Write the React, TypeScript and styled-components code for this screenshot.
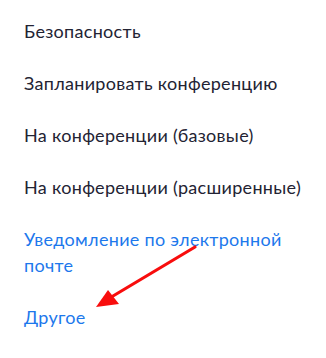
import React from 'react';
import styled, { createGlobalStyle } from 'styled-components';

const GlobalStyle = createGlobalStyle`
  html, body {
    margin: 0;
    padding: 0;
    background: #ffffff;
  }
  body {
    font-family: Lato, "Noto Sans", sans-serif;
  }
`;

const items = [
  { label: 'Безопасность' },
  { label: 'Запланировать конференцию' },
  { label: 'На конференции (базовые)' },
  { label: 'На конференции (расширенные)' },
  { label: 'Уведомление по электронной почте', active: true },
  { label: 'Другое', active: true },
];

function App() {
  return (
    <PageWrap>
      <GlobalStyle />
      <Menu>
        {items.map((item) => (
          <MenuItem key={item.label} $active={!!item.active}>
            {item.label}
          </MenuItem>
        ))}
      </Menu>
      <Arrow width="326" height="358" viewBox="0 0 326 358">
        <line x1="195" y1="247" x2="108" y2="299" stroke="#f80d0d" strokeWidth="3.2" strokeLinecap="round" />
        <polygon points="96,307 108,290 119,304" fill="#f80d0d" />
      </Arrow>
    </PageWrap>
  );
}

export default App;

const PageWrap = styled.div`
  position: relative;
  width: 326px;
  height: 358px;
  overflow: hidden;
  background: #ffffff;
`;

const Menu = styled.ul`
  list-style: none;
  margin: 0;
  padding: 5px 0 0 24px;
  width: 292px;
`;

const MenuItem = styled.li<{ $active: boolean }>`
  padding: 13px 0;
  font-size: 18px;
  line-height: 26px;
  letter-spacing: 0.3px;
  color: ${({ $active }) => ($active ? '#1d78ec' : '#232333')};
  cursor: pointer;
`;

const Arrow = styled.svg`
  position: absolute;
  top: 0;
  left: 0;
  pointer-events: none;
`;
